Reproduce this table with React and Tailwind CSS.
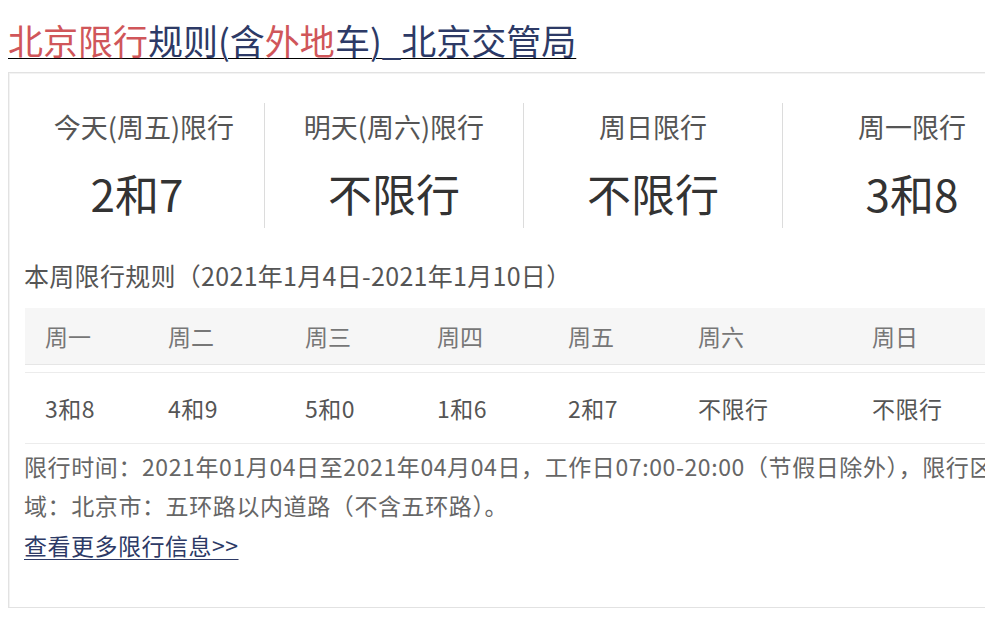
const cjk = { fontFamily: '"Noto Sans CJK SC", "Noto Sans", sans-serif' };

const today = [
  { label: "今天(周五)限行", value: "2和7" },
  { label: "明天(周六)限行", value: "不限行" },
  { label: "周日限行", value: "不限行" },
  { label: "周一限行", value: "3和8" },
];

const week = [
  ["周一", "3和8"],
  ["周二", "4和9"],
  ["周三", "5和0"],
  ["周四", "1和6"],
  ["周五", "2和7"],
  ["周六", "不限行"],
  ["周日", "不限行"],
];

export default function App() {
  return (
    <div className="w-[985px] h-[617px] overflow-hidden bg-white" style={cjk}>
      {/* Title */}
      <div className="pt-[20px] pl-[8px] text-[35px] leading-[40px] whitespace-nowrap">
        <a href="#" className="underline decoration-1 underline-offset-[3px]">
          <span className="text-[#d0565a]">北京限行</span>
          <span className="text-[#2d3a66]">规则(含</span>
          <span className="text-[#d0565a]">外地</span>
          <span className="text-[#2d3a66]">车)_北京交管局</span>
        </a>
      </div>

      {/* Card */}
      <div className="mt-[12px] ml-[8px] w-[1060px] border border-[#e2e2e2] shadow-[inset_1px_1px_0_#f3f3f3] pl-[15px] pt-[30px] pb-[42px]">
        <div className="grid grid-cols-[240px_259px_259px_259px]">
          {today.map((d, i) => (
            <div
              key={d.label}
              className={
                "flex flex-col items-center pt-[8px] pb-[9px] " +
                (i > 0 ? "border-l border-[#dcdcdc]" : "")
              }
            >
              <div className="text-[27px] leading-[32px] text-[#555]">{d.label}</div>
              <div className={"mt-[24px] text-[44px] leading-[52px] text-[#333] " + (i === 0 ? "pr-[14px]" : "")}>
                {d.value}
              </div>
            </div>
          ))}
        </div>

        <div className="mt-[31px] text-[25px] tracking-[0.3px] leading-[32px] text-[#555] whitespace-nowrap">
          本周限行规则（2021年1月4日-2021年1月10日）
        </div>

        <div className="mt-[17px] ml-[1px]">
          <div className="grid grid-cols-[123px_137px_132px_131px_130px_174px_1fr] h-[57px] bg-[#f6f6f6] border-b border-[#e6e6e6]">
            {week.map(([d]) => (
              <div key={d} className="pl-[20px] flex items-center text-[23px] text-[#777]">
                {d}
              </div>
            ))}
          </div>
          <div className="mt-[7px] grid grid-cols-[123px_137px_132px_131px_130px_174px_1fr] h-[72px] border-y border-[#ececec]">
            {week.map(([d, v]) => (
              <div key={d} className="pl-[20px] flex items-center text-[23px] tracking-[0.5px] text-[#555]">
                {v}
              </div>
            ))}
          </div>
        </div>

        <p className="mt-[3px] text-[23px] tracking-[0.6px] leading-[39px] text-[#666] whitespace-nowrap">
          限行时间：2021年01月04日至2021年04月04日，工作日07:00-20:00（节假日除外），限行区
          <br />
          域：北京市：五环路以内道路（不含五环路）。
        </p>
        <a href="#" className="block mt-[1px] text-[23px] tracking-[0.5px] leading-[39px] text-[#2d3a66] underline decoration-1 underline-offset-[4px] w-fit">
          查看更多限行信息&gt;&gt;
        </a>
      </div>
    </div>
  );
}
